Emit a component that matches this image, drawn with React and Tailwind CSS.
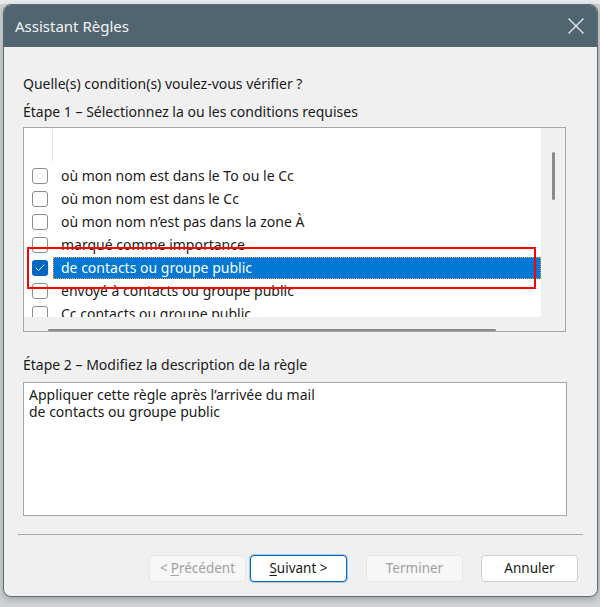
import { Check } from 'lucide-react'

const rows = [
  { label: 'où mon nom est dans le To ou le Cc' },
  { label: 'où mon nom est dans le Cc' },
  { label: 'où mon nom n’est pas dans la zone À' },
  { label: 'marqué comme importance' },
  { label: 'de contacts ou groupe public', checked: true },
  { label: 'envoyé à contacts ou groupe public' },
  { label: 'Cc contacts ou groupe public' },
]

const font = { fontFamily: '"Noto Sans", "Open Sans", Arial, sans-serif' }

const Row = ({ label, checked }) => (
  <div className="flex h-[23px] shrink-0 items-center">
    <div className="flex w-[24px] shrink-0 items-center justify-end">
      {checked ? (
        <span className="flex h-[16px] w-[16px] items-center justify-center rounded-[3px] bg-[#0067c0]">
          <Check className="h-3 w-3 text-white" strokeWidth={2} />
        </span>
      ) : (
        <span className="h-[16px] w-[16px] rounded-[3px] border border-[#8c8c8c] bg-white" />
      )}
    </div>
    <div
      className={
        checked
          ? 'ml-[5px] flex h-[22px] flex-1 items-center whitespace-nowrap border border-dotted border-[#f2a24a] bg-[#0078d4] pl-[7px] text-white'
          : 'ml-[5px] flex h-[22px] flex-1 items-center whitespace-nowrap pl-[8px] text-[#1a1a1a]'
      }
    >
      {label}
    </div>
  </div>
)

const Button = ({ children, variant }) => {
  const styles = {
    disabled: 'border-[#e6e6e6] bg-[#f7f7f7] text-[#a0a0a0]',
    focus: 'border-[#0067c0] bg-white text-[#1a1a1a] ring-1 ring-[#0067c0]/30',
    normal: 'border-[#d0d0d0] bg-white text-[#1a1a1a]',
  }
  return (
    <div
      className={`flex h-[27px] w-[97px] items-center justify-center rounded-[4px] border text-[13.5px] ${styles[variant]}`}
    >
      {children}
    </div>
  )
}

export default function App() {
  return (
    <div className="relative h-[607px] w-[600px] overflow-hidden bg-[#cfd2d4]" style={font}>
      <div className="h-[4px] bg-[#e9ecee]" />
      <div className="ml-[3px] flex h-[593px] w-[595px] flex-col overflow-hidden rounded-[8px] border border-[#5b6d77] bg-[#f0f0f0] shadow-[0_2px_6px_rgba(0,0,0,0.25)]">
        {/* title bar */}
        <div className="flex h-[42px] shrink-0 items-center justify-between bg-[#506570] pl-[11px] pr-[12px]">
          <span className="text-[15px] text-[#f2f4f5]">Assistant Règles</span>
          <svg width="18" height="18" viewBox="0 0 18 18" className="text-[#e8ecee]">
            <path d="M1.5 1.5 16.5 16.5M16.5 1.5 1.5 16.5" stroke="currentColor" strokeWidth="1.3" />
          </svg>
        </div>

        <div className="flex flex-1 flex-col px-[19px] text-[14px] text-[#1a1a1a]">
          <div className="mt-[28px] h-[18px] leading-[18px]">Quelle(s) condition(s) voulez-vous vérifier ?</div>
          <div className="mt-[10px] h-[18px] leading-[18px]">Étape 1 – Sélectionnez la ou les conditions requises</div>

          {/* condition list */}
          <div className="relative mt-[6px] h-[205px] w-[543px] border border-[#a6a6a6] bg-[#f0f0f0]">
            <div className="flex h-[189px]">
              <div className="relative flex w-[517px] flex-col overflow-hidden rounded-br-[3px] bg-white">
                <div className="h-[36px] shrink-0">
                  <div className="ml-[28px] mt-[1px] h-[32px] w-px bg-[#e3e3e3]" />
                </div>
                {rows.map((r) => (
                  <Row key={r.label} {...r} />
                ))}
              </div>
              <div className="flex flex-1 justify-center pt-[24px]">
                <div className="h-[48px] w-[3px] rounded-full bg-[#8a8a8a]" />
              </div>
            </div>
            <div className="ml-[24px] mt-[12px] h-[2px] w-[448px] rounded-full bg-[#8a8a8a]" />

            {/* highlight annotation */}
            <div className="absolute left-[3px] top-[119px] h-[42px] w-[509px] border-2 border-[#ff0000]" />
          </div>

          <div className="mt-[24px] h-[18px] leading-[18px]">Étape 2 – Modifiez la description de la règle</div>
          <div className="mt-[8px] h-[134px] w-[544px] border border-[#a6a6a6] bg-white px-[5px] pt-[3px] leading-[17px]">
            <div>Appliquer cette règle après l’arrivée du mail</div>
            <div>de contacts ou groupe public</div>
          </div>

          <div className="-mx-[5px] mt-[18px] h-px bg-[#a9a9a9]" />

          <div className="mt-[20px] flex items-center">
            <div className="ml-[126px]">
              <Button variant="disabled">
                &lt; <span className="ml-[3px] underline underline-offset-2">P</span>récédent
              </Button>
            </div>
            <div className="ml-[4px]">
              <Button variant="focus">
                <span className="underline underline-offset-2">S</span>uivant &gt;
              </Button>
            </div>
            <div className="ml-[19px]">
              <Button variant="disabled">Terminer</Button>
            </div>
            <div className="ml-[18px]">
              <Button variant="normal">Annuler</Button>
            </div>
          </div>
        </div>
      </div>
    </div>
  )
}
